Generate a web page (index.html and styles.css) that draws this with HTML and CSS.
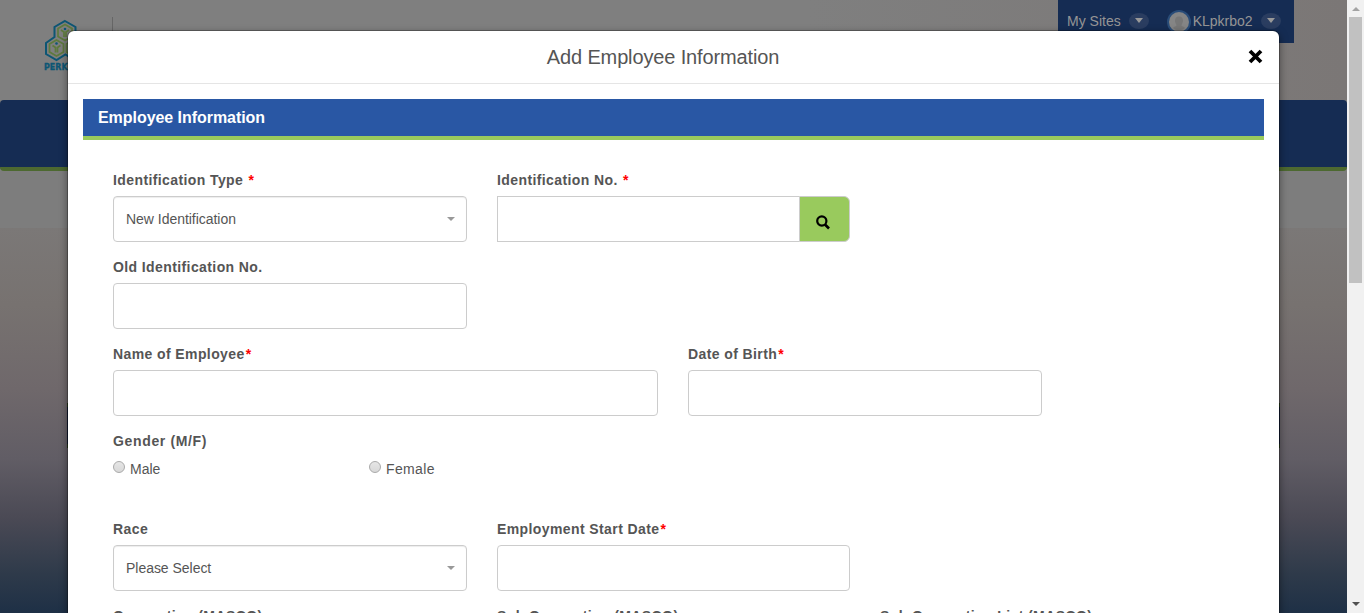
FILE: index.html
```html
<!DOCTYPE html>
<html lang="en">
<head>
<meta charset="utf-8">
<title>Add Employee Information</title>
<link rel="stylesheet" href="styles.css">
</head>
<body>
<div class="screen">
  <div class="page">
    <header class="site-header">
      <div class="brand">
        <svg class="logo" width="52" height="52" viewBox="0 0 52 52">
          <path d="M21 2 L31.500 8 V19 L40 24 V35.500 L30 41 L21.500 35.500 L12.500 41 L2 35 V24 L10.500 18 V8 Z" fill="none" stroke="#0d5674" stroke-width="2"/>
          <g fill="none" stroke="#5e7a3d" stroke-width="1.700">
            <path id="cell" d="M21 5.500 L28 9.500 V17.500 L21 21.500 L14 17.500 V9.500 Z M17 11 L20 13 V18 M25 11 L22 13 V18"/>
            <use href="#cell" x="-8.500" y="15.500"/>
            <use href="#cell" x="8.500" y="15.500"/>
          </g>
          <circle cx="21" cy="10" r="1.300" fill="#0d5674"/>
          <circle cx="12.500" cy="24.500" r="1.300" fill="#0d5674"/>
          <text x="0" y="51" class="logo-text">PERKESO</text>
        </svg>
        <span class="brand-line"></span>
      </div>
      <div class="userbar">
        <span>My Sites</span><span class="drop"><i class="caret-light"></i></span>
        <span class="avatar"><svg width="20" height="20" viewBox="0 0 20 20"><path d="M10 4.500c3 0 4 2 4 4.300c0 2-1 3.200-1.600 4.200c.2 1.500 2.600 1.500 3.600 3a9 9 0 0 1-12 0c1-1.500 3.400-1.500 3.600-3C7 12 6 10.800 6 8.800c0-2.300 1-4.300 4-4.300z" fill="#777"/></svg></span>
        <span>KLpkrbo2</span><span class="drop"><i class="caret-light"></i></span>
      </div>
    </header>
    <nav class="site-nav"></nav>
    <div class="subhead"></div>
    <main class="hero"><div class="search-strip"></div></main>

    <section class="modal">
      <header class="modal-head">
        <h1>Add Employee Information</h1>
        <svg class="close" width="15" height="15" viewBox="0 0 15 15"><path d="M2 2 L13 13 M13 2 L2 13" stroke="#000" stroke-width="3.800"/></svg>
      </header>
      <div class="modal-body">
        <h2 class="banner">Employee Information</h2>
        <form class="fields">
          <div class="row">
            <div class="field w-354"><label>Identification Type <b>*</b></label><div class="control select"><span>New Identification</span><i class="caret"></i></div></div>
            <div class="field w-353"><label>Identification No. <b>*</b></label>
              <div class="group"><div class="control joined"></div><div class="search"><svg width="14" height="15" viewBox="0 0 14 15"><circle cx="5.800" cy="6" r="4.600" fill="none" stroke="#000" stroke-width="2.200"/><path d="M9 9.500 L13 13.500" stroke="#000" stroke-width="2.600"/></svg></div></div>
            </div>
          </div>
          <div class="row"><div class="field w-354"><label>Old Identification No.</label><div class="control"></div></div></div>
          <div class="row">
            <div class="field w-545"><label>Name of Employee<b>*</b></label><div class="control"></div></div>
            <div class="field w-354"><label>Date of Birth<b>*</b></label><div class="control"></div></div>
          </div>
          <div class="gender">
            <label class="wide">Gender (M/F)</label>
            <div class="radios"><span class="option"><i class="radio"></i>Male</span><span class="option female"><i class="radio"></i>Female</span></div>
          </div>
          <div class="row">
            <div class="field w-354"><label>Race</label><div class="control select"><span>Please Select</span><i class="caret"></i></div></div>
            <div class="field w-353"><label>Employment Start Date<b>*</b></label><div class="control"></div></div>
          </div>
          <div class="row">
            <div class="field w-354"><label>Occupation (MASCO)</label></div>
            <div class="field w-353"><label>Sub Occupation (MASCO)</label></div>
            <div class="field w-353"><label>Sub Occupation List (MASCO)</label></div>
          </div>
        </form>
      </div>
    </section>
  </div>
  <div class="scrollbar"><i class="arrow-up"></i><div class="thumb"></div><i class="arrow-down"></i></div>
</div>
</body>
</html>
```
FILE: styles.css
```css
* { box-sizing: border-box; }
body { margin: 0; overflow: hidden; font-family: "Liberation Sans", Arial, sans-serif; font-size: 14px; color: #555; }
.screen { display: flex; height: 613px; overflow: hidden; }
.page { position: relative; flex: 1; display: flex; flex-direction: column; overflow: hidden; background: #7f7f7f; }

.site-header { display: flex; justify-content: space-between; height: 100px; padding-right: 53px; background: linear-gradient(90deg, #7f7f7f 60%, #7b7776); }
.brand { display: flex; padding: 19px 0 0 44px; }
.logo-text { font: bold 8px "DejaVu Sans", sans-serif; fill: #0d5674; stroke: #0d5674; stroke-width: .3px; }
.brand-line { width: 1px; height: 40px; margin: -2px 0 0 16px; background: #666; }
.userbar { display: flex; align-items: center; width: 236px; height: 43px; padding: 0 0 2px 9px; background: #152c53; color: #959595; }
.drop { display: flex; align-items: center; justify-content: center; width: 20px; height: 16px; margin-left: 8px; border-radius: 50%; background: #2a3d60; }
.caret-light { border: 4px solid transparent; border-top: 5px solid #999; border-bottom: 0; }
.avatar { width: 24px; height: 24px; margin: 2px 2px 0 18px; border: 2px solid #294c78; border-radius: 50%; overflow: hidden; background: #858585; }
.site-nav { height: 71px; border-bottom: 4px solid #4d6930; border-radius: 4px; background: #152c53; }
.subhead { height: 57px; background: #7d7d7d; }
.hero { flex: 1; padding: 175px 67px 0; background: linear-gradient(#7b7877 0%, #777270 20%, #6f686b 42%, #615d65 60%, #4b4a55 75%, #2e3a4a 90%, #1e3046 100%); }
.search-strip { height: 45px; border: solid #293d1c; border-width: 4px 0; background: #101b34; }

.modal { position: absolute; top: 31px; left: 68px; width: 1211px; height: 620px; border-radius: 6px 6px 0 0; background: #fff; box-shadow: 0 0 0 1px rgba(0,0,0,.25), 0 3px 9px rgba(0,0,0,.5); }
.modal-head { display: flex; align-items: center; height: 53px; padding: 0 16px 0 10px; border-bottom: 1px solid #e5e5e5; }
.modal-head h1 { flex: 1; margin: 0; text-align: center; font-size: 20px; font-weight: 400; letter-spacing: -.14px; }
.close { flex: none; margin-top: -2px; }
.modal-body { padding: 15px 15px 0; }
.banner { height: 41px; margin: 0; padding-left: 15px; border-bottom: 4px solid #99ca5d; background: #2957a4; color: #fff; font-size: 16px; line-height: 37px; letter-spacing: -.05px; }
.fields { padding: 29px 30px 0; }
.row { display: flex; gap: 30px; height: 87px; }
.field { flex: none; }
.w-354 { width: 354px; }
.w-353 { width: 353px; }
.w-545 { width: 545px; }
label { display: block; height: 27px; line-height: 22px; font-weight: 700; letter-spacing: .4px; white-space: nowrap; }
.wide { letter-spacing: .65px; }
label b { margin-left: 1px; color: #f00; }
.control { height: 46px; border: 1px solid #ccc; border-radius: 4px; background: #fff; }
.select { display: flex; align-items: center; justify-content: space-between; padding: 0 11px 0 12px; letter-spacing: -.03px; box-shadow: inset 0 1px 1px rgba(0,0,0,.075); }
.caret { border: 4px solid transparent; border-top-color: #999; border-bottom: 0; }
.group { display: flex; }
.joined { flex: 1; border-right: 0; border-radius: 0; }
.search { display: flex; justify-content: center; width: 51px; height: 46px; padding: 18px 4px 0 0; border: 1px solid #ccc; border-radius: 0 6px 6px 0; background: #99ca5d; }
.gender { height: 88px; }
.radios { display: flex; }
.option { display: flex; width: 256px; height: 24px; line-height: 24px; }
.female { letter-spacing: .35px; }
.radio { width: 12px; height: 12px; margin: 4px 5px 0 0; border: 1px solid #aaa; border-radius: 50%; background: linear-gradient(#e6e6e6, #d8d8d8); }

.scrollbar { display: flex; flex-direction: column; align-items: center; width: 17px; background: #f1f1f1; }
.thumb { width: 13px; height: 266px; margin: 6px 0 auto 0; background: #c1c1c1; }
.arrow-up { margin-top: 7px; border: 4px solid transparent; border-top: 0; border-bottom: 4px solid #a3a3a3; }
.arrow-down { margin-bottom: 7px; border: 4px solid transparent; border-bottom: 0; border-top: 4px solid #505050; }
```
